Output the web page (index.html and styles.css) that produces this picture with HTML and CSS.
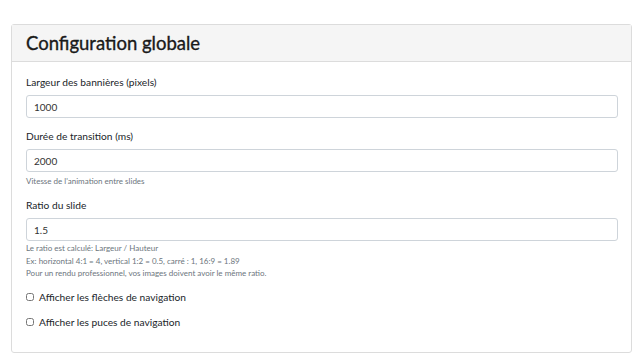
FILE: index.html
```html
<!DOCTYPE html>
<html lang="fr">
<head>
    <meta charset="UTF-8">
    <title>Configuration globale</title>
    <link rel="stylesheet" href="styles.css">
</head>
<body>
    <div class="card">
        <div class="card-header">
            <h2>Configuration globale</h2>
        </div>
        <div class="card-body">
            <div class="form-group">
                <label for="bannerWidth">Largeur des bannières (pixels)</label>
                <input type="text" id="bannerWidth" class="form-control" value="1000">
            </div>
            <div class="form-group">
                <label for="transition">Durée de transition (ms)</label>
                <input type="text" id="transition" class="form-control" value="2000">
                <small class="help">Vitesse de l'animation entre slides</small>
            </div>
            <div class="form-group ratio">
                <label for="ratio">Ratio du slide</label>
                <input type="text" id="ratio" class="form-control" value="1.5">
                <small class="help">Le ratio est calculé: Largeur / Hauteur<br>
                    Ex: horizontal 4:1 = 4, vertical 1:2 = 0.5, carré : 1, 16:9 = 1.89<br>
                    Pour un rendu professionnel, vos images doivent avoir le même ratio.</small>
            </div>
            <div class="form-check">
                <input type="checkbox" id="arrows">
                <label for="arrows">Afficher les flèches de navigation</label>
            </div>
            <div class="form-check">
                <input type="checkbox" id="dots">
                <label for="dots">Afficher les puces de navigation</label>
            </div>
        </div>
    </div>
</body>
</html>
```

FILE: styles.css
```css
body {
    margin: 0;
    padding: 24px 2px 0 11px;
    font-family: Lato, "Noto Sans", sans-serif;
    color: #212529;
    background-color: #fff;
}
.card {
    border: 1px solid #dcdcdc;
    border-radius: 3px;
    background-color: #fff;
}
.card-header {
    background-color: #f5f5f5;
    border-bottom: 1px solid #dcdcdc;
    height: 36px;
    display: flex;
    align-items: center;
    padding: 0 14px;
}
.card-header h2 {
    margin: 0;
    font-size: 18.5px;
    font-weight: 400;
    color: #1a1a1a;
    -webkit-text-stroke: 0.35px #1a1a1a;
}
.card-body {
    padding: 13px 13px 22px 14px;
}
.form-group {
    margin-bottom: 11px;
}
.form-group label {
    display: block;
    font-size: 10.2px;
    line-height: 14px;
    margin-bottom: 6px;
}
.form-control {
    display: block;
    box-sizing: border-box;
    width: 100%;
    height: 23px;
    padding: 0 7px;
    font-family: inherit;
    font-size: 10px;
    color: #333;
    border: 1px solid #ced4da;
    border-radius: 3px;
    background-color: #fff;
}
.help {
    display: block;
    margin-top: 3px;
    font-size: 8px;
    line-height: 12px;
    color: #6c757d;
}
.ratio .help {
    margin-top: 1px;
    line-height: 12.5px;
}
.ratio {
    margin-bottom: 9px;
}
.form-check {
    display: flex;
    align-items: center;
    height: 16px;
    margin-bottom: 9px;
}
.form-check:last-child {
    margin-bottom: 0;
}
.form-check input {
    margin: 0 5px 0 0;
    width: 8px;
    height: 8px;
}
.form-check label {
    font-size: 10.2px;
    line-height: 16px;
}
```
